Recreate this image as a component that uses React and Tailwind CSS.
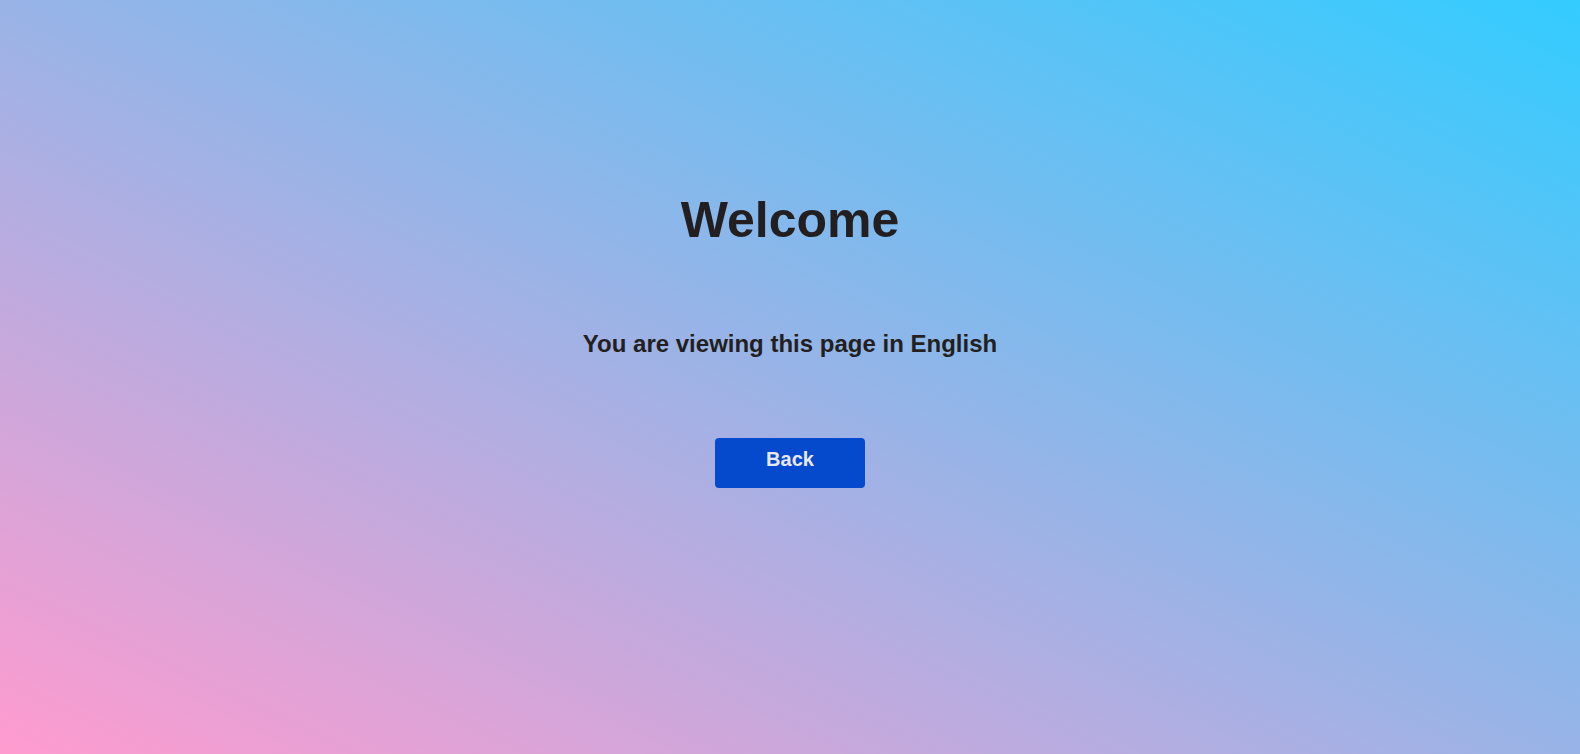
export default function App() {
  return (
    <div
      className="min-h-screen w-full bg-[linear-gradient(to_top_right,#ff9bcf,#33ccff)] flex flex-col items-center pt-[195px]"
      style={{ fontFamily: '"Liberation Sans", Arial, sans-serif' }}
    >
      <h1 className="text-[50px] leading-none font-bold text-[#231f20]">Welcome</h1>
      <p className="mt-[87px] text-[24px] leading-none font-bold text-[#231f20]">
        You are viewing this page in English
      </p>
      <button className="mt-[82px] w-[150px] h-[50px] pt-[11px] flex justify-center items-start rounded-[4px] bg-[#0549cc] text-[#e8e8f2] text-[20px] leading-none font-bold">
        Back
      </button>
    </div>
  );
}
